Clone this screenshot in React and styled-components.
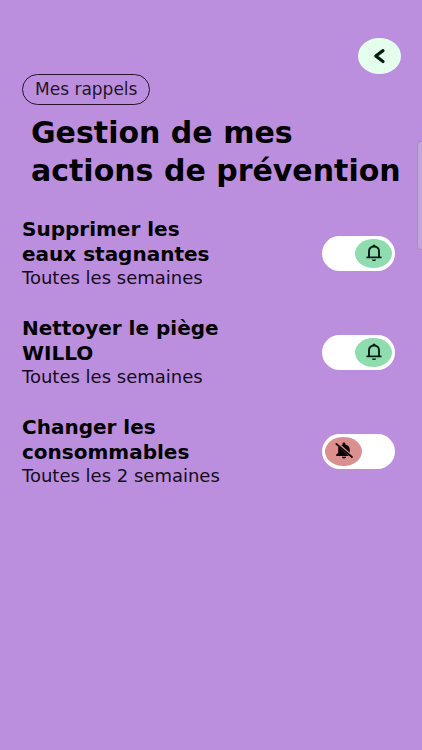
import { useState } from 'react';
import styled, { createGlobalStyle } from 'styled-components';

const REMINDERS = [
  { id: 'water', title: ['Supprimer les', 'eaux stagnantes'], frequency: 'Toutes les semaines', active: true },
  { id: 'trap', title: ['Nettoyer le piège', 'WILLO'], frequency: 'Toutes les semaines', active: true },
  { id: 'supplies', title: ['Changer les', 'consommables'], frequency: 'Toutes les 2 semaines', active: false },
];

function BellIcon() {
  return (
    <svg width="18" height="18" viewBox="0 0 18 18" fill="none" aria-hidden="true">
      <path d="M1.5 13.4h15M4 13.2V7.2C4 4.3 6.2 2.5 9 2.5s5 1.8 5 4.7v6" stroke="#071c14" strokeWidth="1.9" />
      <path d="M7.4 2.2a1.6 1.6 0 0 1 3.2 0zM7 15.4h4c0 1-.8 1.6-2 1.6s-2-.6-2-1.6z" fill="#071c14" />
    </svg>
  );
}

function BellOffIcon() {
  return (
    <svg width="18" height="18" viewBox="0 0 18 18" fill="none" aria-hidden="true">
      <path d="M3.4 4.5 14 14H1.2v-1.5l2-1.6V7.2c0-1 0-1.9.2-2.7z" fill="#0b0505" />
      <path d="M6.2 3.1c.4-.3.9-.5 1.4-.6V1.8C7.6 1 8.2.5 9 .5s1.4.5 1.4 1.3v.7c2.7.6 4.4 2.6 4.4 5.1v3.1zM6.9 14.8h4.2c0 1-.9 1.7-2.1 1.7s-2.1-.7-2.1-1.7z" fill="#0b0505" />
      <path d="M1.3 1.8 17 15" stroke="#0b0505" strokeWidth="1.7" strokeLinecap="round" />
    </svg>
  );
}

function Reminder({ reminder }) {
  const [active, setActive] = useState(reminder.active);

  return (
    <Row>
      <label htmlFor={reminder.id}>
        <RowTitle>
          {reminder.title[0]}
          <br />
          {reminder.title[1]}
        </RowTitle>
        <Frequency>{reminder.frequency}</Frequency>
      </label>
      <Switch $active={active}>
        <SwitchInput
          id={reminder.id}
          type="checkbox"
          checked={active}
          onChange={(e) => setActive(e.target.checked)}
        />
        <Thumb $active={active}>{active ? <BellIcon /> : <BellOffIcon />}</Thumb>
      </Switch>
    </Row>
  );
}

function App() {
  return (
    <>
      <GlobalStyle />
      <Page>
        <BackButton type="button" aria-label="Retour">
          <svg width="16" height="16" viewBox="0 0 16 16" fill="none" aria-hidden="true">
            <path d="M11 2.6 3.8 8l7.2 5.6" stroke="#071c14" strokeWidth="3.2" strokeLinecap="round" strokeLinejoin="round" />
          </svg>
        </BackButton>
        <Tag>Mes rappels</Tag>
        <Title>
          Gestion de mes
          <br />
          actions de prévention
        </Title>
        <List>
          {REMINDERS.map((reminder) => (
            <Reminder key={reminder.id} reminder={reminder} />
          ))}
        </List>
        <EdgeHandle />
      </Page>
    </>
  );
}

const GlobalStyle = createGlobalStyle`
  * {
    box-sizing: border-box;
  }

  body {
    margin: 0;
    background: #bb8fdd;
    color: #000000;
    font-family: 'DejaVu Sans', Inter, sans-serif;
  }
`;

const Page = styled.main`
  position: relative;
  display: flex;
  flex-direction: column;
  align-items: flex-start;
  min-height: 100vh;
  padding: 38px 21px 38px 22px;
  overflow: hidden;
`;

const BackButton = styled.button`
  display: flex;
  align-items: center;
  justify-content: center;
  align-self: flex-end;
  width: 43px;
  height: 36px;
  padding: 0;
  border: 0;
  border-radius: 50%;
  background: #e4ffec;
  cursor: pointer;
`;

const Tag = styled.span`
  padding: 0 12px;
  border: 1px solid #24142e;
  border-radius: 16px;
  color: #24142e;
  font-size: 17px;
  line-height: 29px;
`;

const Title = styled.h1`
  margin: 9px 0 0 9px;
  font-size: 30px;
  font-weight: 700;
  line-height: 38px;
  white-space: nowrap;
`;

const List = styled.ul`
  display: flex;
  flex-direction: column;
  align-self: stretch;
  gap: 27px;
  margin: 27px 0 0;
  padding: 0;
  list-style: none;
`;

const Row = styled.li`
  display: flex;
  align-items: center;
  justify-content: space-between;
  padding-right: 6px;
`;

const RowTitle = styled.span`
  display: block;
  font-size: 20px;
  font-weight: 700;
  line-height: 25px;
`;

const Frequency = styled.span`
  display: block;
  color: #160b1d;
  font-size: 18px;
  line-height: 22px;
`;

const Switch = styled.span`
  position: relative;
  display: flex;
  justify-content: ${(props) => (props.$active ? 'flex-end' : 'flex-start')};
  width: 73px;
  height: 35px;
  padding: 3px;
  border-radius: 18px;
  background: #ffffff;
`;

const SwitchInput = styled.input`
  position: absolute;
  inset: 0;
  width: 100%;
  height: 100%;
  margin: 0;
  opacity: 0;
  cursor: pointer;
`;

const Thumb = styled.span`
  display: flex;
  align-items: center;
  justify-content: center;
  width: 37px;
  height: 29px;
  border-radius: 50%;
  background: ${(props) => (props.$active ? '#8fdcae' : '#dc8f8f')};
  pointer-events: none;
`;

const EdgeHandle = styled.div`
  position: absolute;
  top: 141px;
  right: -4px;
  width: 9px;
  height: 109px;
  border: 1px solid #aa8dc0;
  border-radius: 4px;
  background: #c3a5da;
`;

export default App;
